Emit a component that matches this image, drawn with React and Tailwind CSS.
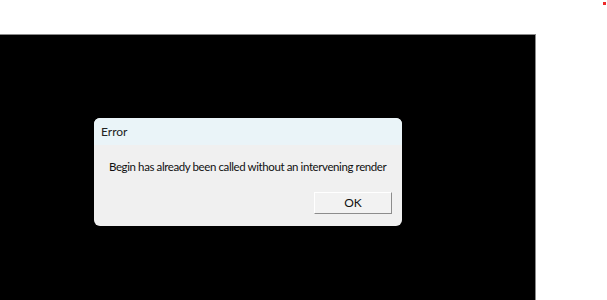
import React from "react";

const App = () => {
  return (
    <div className="relative w-[607px] h-[300px] bg-white overflow-hidden" style={{ fontFamily: 'Lato, "Noto Sans", sans-serif' }}>
      <div className="absolute right-[1px] top-[2px] w-[3px] h-[3px] bg-[#ee2a2a]" />
      <div className="h-[34px]" />
      <div className="w-[536px] h-[266px] bg-black border-t border-r border-[#8a8a8a] pt-[83px] pl-[94px]">
        <div className="w-[308px] h-[108px] rounded-[6px] bg-[#f0f0f0] overflow-hidden flex flex-col">
          <div className="h-[27px] bg-[#eaf4f8] px-[7px] flex items-center text-[12px] text-[#222]">
            Error
          </div>
          <div className="h-[44px] flex items-center pl-[15px] text-[11.5px] tracking-[-0.4px] text-[#111] whitespace-nowrap">
            Begin has already been called without an intervening render
          </div>
          <div className="flex justify-end pr-[10px] pt-[3px]">
            <button className="w-[78px] h-[22px] bg-[#f2f2f2] border border-t-white border-l-white border-b-[#8c8c8c] border-r-[#8c8c8c] text-[12px] text-[#111] leading-none">
              OK
            </button>
          </div>
        </div>
      </div>
    </div>
  );
};

export default App;
